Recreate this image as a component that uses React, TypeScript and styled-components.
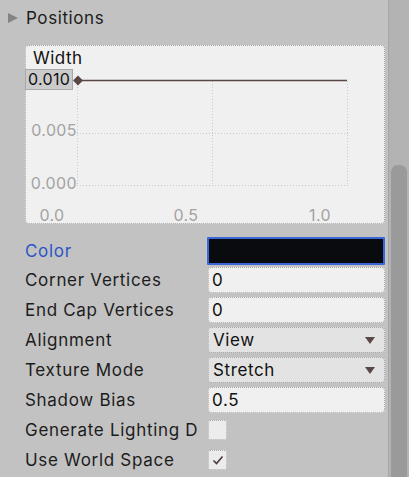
import React from "react";
import styled, { createGlobalStyle } from "styled-components";

const Global = createGlobalStyle`
  html, body { margin: 0; padding: 0; background: #c2c2c2; }
  body { font-family: Inter, "Noto Sans", sans-serif; color: #1c1c1c; }
`;

const Page = styled.div`
  display: flex;
  width: 409px;
  height: 477px;
  overflow: hidden;
  background: #c2c2c2;
`;

const Content = styled.div`
  flex: 1;
  display: flex;
  flex-direction: column;
  padding: 8px 0 0 8px;
`;

const Scrollbar = styled.div`
  width: 16px;
  border-left: 1px solid #a6a6a6;
  background: #b3b3b3;
  display: flex;
  flex-direction: column;
  padding: 165px 2px 0 2px;
`;

const Thumb = styled.div`
  flex: 1;
  background: #9a9a9a;
  border-radius: 7px 7px 0 0;
`;

const Foldout = styled.div`
  display: flex;
  align-items: center;
  height: 20px;
  font-size: 17px;
  letter-spacing: 0.6px;
  color: #1c1c1c;
`;

const Arrow = styled.span`
  width: 0;
  height: 0;
  border-top: 5.5px solid transparent;
  border-bottom: 5.5px solid transparent;
  border-left: 10px solid #848484;
  margin-right: 8px;
`;

const Body = styled.div`
  padding-left: 17px;
  display: flex;
  flex-direction: column;
`;

const CurveBox = styled.div`
  position: relative;
  margin-top: 17px;
  width: 358px;
  height: 177px;
  background: #f0f0f0;
  border: 1px dotted #a4a4a4;
  border-radius: 4px;
`;

const CurveTitle = styled.div`
  position: absolute;
  left: 7px;
  top: 2px;
  font-size: 17px;
  letter-spacing: 0.5px;
  color: #111;
`;

const ValueTag = styled.div`
  position: absolute;
  left: -1px;
  top: 23px;
  width: 44px;
  height: 19px;
  background: #cbcbcb;
  border: 1px solid #a9a9a9;
  font-size: 16px;
  letter-spacing: 0.3px;
  line-height: 19px;
  padding-left: 2px;
  box-sizing: content-box;
  color: #111;
`;

const Rows = styled.div`
  display: flex;
  flex-direction: column;
  gap: 4px;
  margin-top: 13px;
`;

const Row = styled.div`
  display: grid;
  grid-template-columns: 183px 177px;
  align-items: center;
  height: 26px;
`;

const Label = styled.div<{ $active?: boolean }>`
  font-size: 17px;
  letter-spacing: 0.7px;
  color: ${(p) => (p.$active ? "#2a56c6" : "#1c1c1c")};
  white-space: nowrap;
  overflow: hidden;
`;

const ColorField = styled.div`
  height: 24px;
  margin-left: -1px;
  background: #0a0b0f;
  border: 2px solid #3a66d8;
  border-radius: 1px;
`;

const TextField = styled.div`
  height: 24px;
  background: #f0f0f0;
  border: 1px dotted #a9a9a9;
  border-radius: 4px;
  font-size: 17px;
  letter-spacing: 0.6px;
  line-height: 24px;
  padding-left: 3px;
  color: #111;
`;

const Dropdown = styled.div`
  height: 24px;
  background: #e3e3e3;
  border: 1px dotted #a9a9a9;
  border-bottom-color: #999;
  border-radius: 4px;
  font-size: 17px;
  letter-spacing: 0.6px;
  line-height: 24px;
  padding: 0 9px 0 4px;
  color: #111;
  display: flex;
  align-items: center;
  justify-content: space-between;
`;

const Caret = styled.span`
  width: 0;
  height: 0;
  border-left: 5px solid transparent;
  border-right: 5px solid transparent;
  border-top: 7px solid #5a4848;
`;

const Check = styled.div`
  width: 17px;
  height: 18px;
  background: #ececec;
  border: 1px dotted #a9a9a9;
  border-radius: 2px;
  display: flex;
  align-items: center;
  justify-content: center;
`;

const gridStroke = "#c9c9c9";

function Curve() {
  return (
    <CurveBox>
      <CurveTitle>Width</CurveTitle>
      <svg width="358" height="177" style={{ position: "absolute", left: 0, top: 0 }}>
        <g stroke={gridStroke} strokeWidth="1" strokeDasharray="1 2" fill="none">
          <line x1="51.5" y1="35" x2="51.5" y2="140" />
          <line x1="186.5" y1="35" x2="186.5" y2="140" />
          <line x1="321.5" y1="35" x2="321.5" y2="140" />
          <line x1="51" y1="87.5" x2="322" y2="87.5" />
          <line x1="51" y1="139.5" x2="322" y2="139.5" />
        </g>
        <line x1="52" y1="34.5" x2="321" y2="34.5" stroke="#5b4646" strokeWidth="1.5" />
        <rect x="48.5" y="31" width="7" height="7" fill="#5b4646" transform="rotate(45 52 34.5)" />
        <g fill="#a3a3a3" fontSize="16" letterSpacing="0.4" fontFamily="Inter, 'Noto Sans', sans-serif">
          <text x="51" y="89.5" textAnchor="end">0.005</text>
          <text x="51" y="142.5" textAnchor="end">0.000</text>
          <text x="26" y="174.5" textAnchor="middle">0.0</text>
          <text x="160" y="174.5" textAnchor="middle">0.5</text>
          <text x="294" y="174.5" textAnchor="middle">1.0</text>
        </g>
      </svg>
      <ValueTag>0.010</ValueTag>
    </CurveBox>
  );
}

export default function App() {
  return (
    <>
      <Global />
      <Page>
        <Content>
          <Foldout>
            <Arrow />
            Positions
          </Foldout>
          <Body>
            <Curve />
            <Rows>
              <Row>
                <Label $active>Color</Label>
                <ColorField />
              </Row>
              <Row>
                <Label>Corner Vertices</Label>
                <TextField>0</TextField>
              </Row>
              <Row>
                <Label>End Cap Vertices</Label>
                <TextField>0</TextField>
              </Row>
              <Row>
                <Label>Alignment</Label>
                <Dropdown>
                  View
                  <Caret />
                </Dropdown>
              </Row>
              <Row>
                <Label>Texture Mode</Label>
                <Dropdown>
                  Stretch
                  <Caret />
                </Dropdown>
              </Row>
              <Row>
                <Label>Shadow Bias</Label>
                <TextField>0.5</TextField>
              </Row>
              <Row>
                <Label>Generate Lighting D</Label>
                <Check />
              </Row>
              <Row>
                <Label>Use World Space</Label>
                <Check>
                  <svg width="12" height="10" viewBox="0 0 12 10">
                    <path d="M1.5 5.5 L4.5 8.5 L10.5 1.5" stroke="#4a3a3a" strokeWidth="1.6" fill="none" />
                  </svg>
                </Check>
              </Row>
            </Rows>
          </Body>
        </Content>
        <Scrollbar>
          <Thumb />
        </Scrollbar>
      </Page>
    </>
  );
}
